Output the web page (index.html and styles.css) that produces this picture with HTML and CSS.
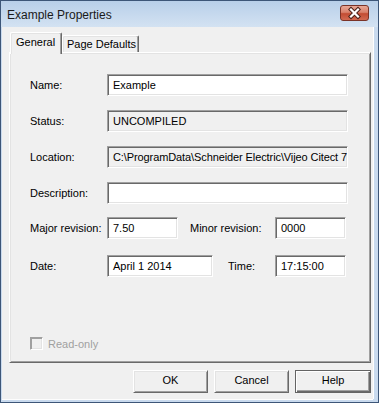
FILE: index.html
```html
<!DOCTYPE html>
<html lang="en">
<head>
    <meta charset="UTF-8">
    <title>Example Properties</title>
    <link rel="stylesheet" href="styles.css">
</head>
<body>
    <div class="window">
        <div class="titlebar">
            <span class="title">Example Properties</span>
            <span class="close-btn">
                <svg width="27" height="14" viewBox="0 0 27 14">
                    <path d="M10 3.5 L17 10.5 M17 3.5 L10 10.5" stroke="#4a2118" stroke-width="4.2" stroke-linecap="square"/>
                    <path d="M10 3.5 L17 10.5 M17 3.5 L10 10.5" stroke="#fff" stroke-width="2.2" stroke-linecap="square"/>
                </svg>
            </span>
        </div>
        <div class="client">
            <div class="tabs">
                <div class="tab active">General</div>
                <div class="tab">Page Defaults</div>
            </div>
            <div class="panel">
                <div class="row">
                    <span class="label">Name:</span>
                    <div class="field wide">Example</div>
                </div>
                <div class="row">
                    <span class="label">Status:</span>
                    <div class="field wide readonly">UNCOMPILED</div>
                </div>
                <div class="row">
                    <span class="label">Location:</span>
                    <div class="field wide readonly location">C:\ProgramData\Schneider Electric\Vijeo Citect 7</div>
                </div>
                <div class="row">
                    <span class="label">Description:</span>
                    <div class="field wide"></div>
                </div>
                <div class="row row-major">
                    <span class="label">Major revision:</span>
                    <div class="field short">7.50</div>
                    <span class="label minor-label">Minor revision:</span>
                    <div class="field short">0000</div>
                </div>
                <div class="row row-date">
                    <span class="label">Date:</span>
                    <div class="field date">April 1 2014</div>
                    <span class="label time-label">Time:</span>
                    <div class="field short">17:15:00</div>
                </div>
                <div class="check-row">
                    <span class="checkbox"></span>
                    <span class="check-label">Read-only</span>
                </div>
            </div>
            <div class="buttons">
                <div class="btn">OK</div>
                <div class="btn">Cancel</div>
                <div class="btn default">Help</div>
            </div>
        </div>
    </div>
</body>
</html>
```

FILE: styles.css
```css
body {
    margin: 0;
    padding: 0;
    font-family: 'Liberation Sans', Arial, sans-serif;
    font-size: 11px;
    color: #000;
    background: #fff;
}
.window {
    width: 379px;
    height: 403px;
    box-sizing: border-box;
    border: 1px solid #3d5678;
    background: #c9daee;
    display: flex;
    flex-direction: column;
}
.titlebar {
    height: 26px;
    display: flex;
    align-items: flex-start;
    justify-content: space-between;
    background: linear-gradient(#b8cfe9, #d3e2f2);
}
.title {
    font-size: 12px;
    color: #1a1a1a;
    padding: 7px 0 0 6px;
}
.close-btn {
    display: block;
    width: 27px;
    height: 14px;
    margin: 4px 9px 0 0;
    border: 1px solid #7a3328;
    border-radius: 3px;
    background: linear-gradient(#e8a796 0%, #d9816c 45%, #c34c33 55%, #d26a52 100%);
}
.close-btn svg {
    display: block;
}
.client {
    flex: 1;
    margin: 0 5px 3px 1px;
    padding: 5px 2px 6px 7px;
    background: #f0f0f0;
    display: flex;
    flex-direction: column;
    box-shadow: 1px 0 0 #fdfdfd, 0 1px 0 #fdfdfd;
}
.tabs {
    display: flex;
    align-items: flex-end;
    padding-left: 1px;
}
.tab {
    box-sizing: border-box;
    height: 17px;
    width: 77px;
    padding: 2px 0 0 4px;
    border-top: 1px solid #fff;
    border-left: 1px solid #fff;
    border-right: 1px solid #696969;
    box-shadow: inset -1px 0 0 #a0a0a0, inset 1px 1px 0 #e3e3e3;
    border-radius: 2px 2px 0 0;
    background: #f0f0f0;
}
.tab.active {
    position: relative;
    height: 22px;
    width: 52px;
    padding: 3px 0 0 5px;
    margin-bottom: -2px;
    z-index: 1;
}
.panel {
    flex: 1;
    display: flex;
    flex-direction: column;
    border-top: 1px solid #fff;
    border-left: 1px solid #fff;
    border-right: 1px solid #696969;
    border-bottom: 1px solid #696969;
    box-shadow: inset 1px 1px 0 #e3e3e3, inset -1px -1px 0 #a0a0a0;
    padding: 21px 22px 12px 20px;
}
.row {
    display: flex;
    align-items: center;
    margin-bottom: 14px;
}
.row-major {
    margin-top: -1px;
    margin-bottom: 16px;
}
.label {
    width: 77px;
    flex-shrink: 0;
}
.minor-label {
    width: 85px;
    margin-left: 12px;
}
.time-label {
    width: 47px;
    margin-left: 15px;
}
.field {
    box-sizing: border-box;
    height: 22px;
    line-height: 17px;
    background: #fff;
    border-top: 1px solid #a0a0a0;
    border-left: 1px solid #a0a0a0;
    border-right: 1px solid #fff;
    border-bottom: 1px solid #fff;
    box-shadow: inset 1px 1px 0 #696969, inset -1px -1px 0 #e3e3e3;
    white-space: nowrap;
    overflow: hidden;
    padding: 2px 3px 0 5px;
}
.field.wide {
    flex: 1;
}
.field.readonly {
    background: #f0f0f0;
}
.field.location {
    letter-spacing: -0.1px;
}
.field.short {
    width: 71px;
}
.field.date {
    width: 106px;
}
.check-row {
    margin-top: auto;
    display: flex;
    align-items: center;
}
.checkbox {
    box-sizing: border-box;
    width: 13px;
    height: 13px;
    border-top: 1px solid #a0a0a0;
    border-left: 1px solid #a0a0a0;
    border-right: 1px solid #fff;
    border-bottom: 1px solid #fff;
    box-shadow: inset 1px 1px 0 #a0a0a0, inset -1px -1px 0 #e3e3e3;
    background: #f0f0f0;
}
.check-label {
    margin-left: 5px;
    color: #a0a0a0;
}
.buttons {
    display: flex;
    justify-content: flex-end;
    gap: 6px;
    margin-top: 7px;
}
.btn {
    box-sizing: border-box;
    width: 75px;
    height: 23px;
    line-height: 19px;
    text-align: center;
    border-top: 1px solid #fff;
    border-left: 1px solid #fff;
    border-right: 1px solid #696969;
    border-bottom: 1px solid #696969;
    box-shadow: inset 1px 1px 0 #e3e3e3, inset -1px -1px 0 #a0a0a0;
    background: #f0f0f0;
}
.btn.default {
    width: 76px;
    border: 1px solid #646464;
    box-shadow: inset 1px 1px 0 #fff, inset -1px -1px 0 #696969, inset -2px -2px 0 #a0a0a0;
}
```
